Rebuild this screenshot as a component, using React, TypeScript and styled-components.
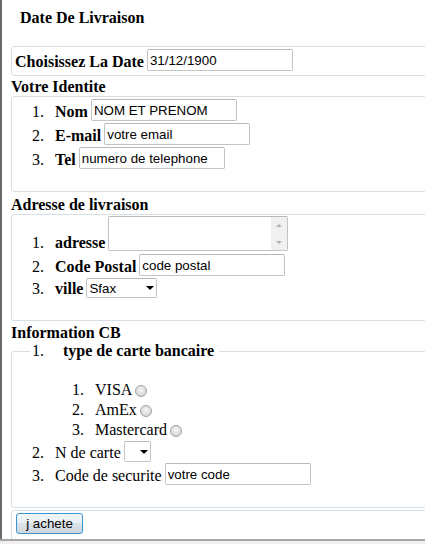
import React from "react";
import styled, { createGlobalStyle } from "styled-components";

const GlobalStyle = createGlobalStyle`
  html, body { margin: 0; padding: 0; background: #fff; overflow: hidden; }
  body {
    font-family: "Liberation Serif", "Times New Roman", serif;
    font-size: 16px;
    color: #000;
  }
`;

const Window = styled.div`
  width: 425px;
  height: 544px;
  display: flex;
  flex-direction: column;
  overflow: hidden;
`;

const Page = styled.form`
  flex: 1;
  min-height: 0;
  border-left: 2px solid #6a6a6a;
  padding-left: 9px;
  overflow: hidden;
`;

const StatusEdge = styled.div`
  flex: none;
  height: 3px;
  border-top: 2px solid #a6a6a6;
  background: #f2eeee;
`;

const Title = styled.div`
  margin: 9px 0 0 9px;
  font-weight: bold;
  line-height: 18px;
`;

const SectionTitle = styled.div<{ $top: number }>`
  margin-top: ${(p) => p.$top}px;
  font-weight: bold;
  line-height: 18px;
`;

const Box = styled.fieldset<{ $top: number; $pt?: number; $pb: number }>`
  margin: ${(p) => p.$top}px 0 0 0;
  padding: ${(p) => p.$pt ?? 2}px 0 ${(p) => p.$pb}px 3px;
  width: 440px;
  min-width: 0;
  box-sizing: border-box;
  border: 1px solid #d5dfe5;
  border-radius: 3px;
`;

const Legend = styled.legend`
  margin-left: 15px;
  padding: 0 2px;
  line-height: 18px;
  display: flex;
`;

const DateRow = styled.div`
  display: flex;
  align-items: flex-end;
`;

const FieldList = styled.ol<{ $gap: number; $top?: number }>`
  list-style: none;
  margin: ${(p) => p.$top ?? 0}px 0 0 0;
  padding: 0 0 0 17px;
  display: flex;
  flex-direction: column;
  gap: ${(p) => p.$gap}px;
`;

const Row = styled.li`
  display: flex;
  align-items: flex-end;
`;

const Marker = styled.span<{ $w?: number }>`
  flex: none;
  width: ${(p) => p.$w ?? 23}px;
  font-weight: normal;
  line-height: 18px;
`;

const Label = styled.span<{ $plain?: boolean }>`
  flex: none;
  font-weight: ${(p) => (p.$plain ? "normal" : "bold")};
  line-height: 18px;
  margin-right: 3px;
  white-space: nowrap;
`;

const TextInput = styled.input`
  flex: none;
  width: 146px;
  height: 22px;
  box-sizing: border-box;
  margin: 0;
  padding: 0 2px;
  border: 1px solid #c4c4c4;
  border-top-color: #b8b8b8;
  border-radius: 2px;
  font-family: "Liberation Sans", Arial, sans-serif;
  font-size: 13.33px;
  color: #000;
  background: #fff;
  outline: none;
`;

const AreaBox = styled.div`
  flex: none;
  display: flex;
  width: 180px;
  height: 35px;
  margin-bottom: 1px;
  box-sizing: border-box;
  border: 1px solid #c4c4c4;
  border-top-color: #b8b8b8;
  border-radius: 2px;
  overflow: hidden;
`;

const Area = styled.textarea`
  flex: 1;
  min-width: 0;
  border: 0;
  margin: 0;
  padding: 1px 2px;
  resize: none;
  overflow: hidden;
  outline: none;
  font-family: "Liberation Sans", Arial, sans-serif;
  font-size: 13.33px;
`;

const ScrollTrack = styled.div`
  flex: none;
  width: 16px;
  background: #f0f0f0;
  display: flex;
  flex-direction: column;
  justify-content: space-between;
  align-items: center;
  padding: 7px 0 6px;
  box-sizing: border-box;
`;

const ScrollArrow = styled.span<{ $down?: boolean }>`
  width: 0;
  height: 0;
  border-left: 3px solid transparent;
  border-right: 3px solid transparent;
  ${(p) =>
    p.$down
      ? "border-top: 3px solid #b0b0b0;"
      : "border-bottom: 3px solid #b0b0b0;"}
`;

const SelectWrap = styled.span<{ $w: number; $h: number }>`
  position: relative;
  flex: none;
  display: inline-flex;
  width: ${(p) => p.$w}px;
  height: ${(p) => p.$h}px;
`;

const Select = styled.select`
  appearance: none;
  -webkit-appearance: none;
  width: 100%;
  height: 100%;
  box-sizing: border-box;
  margin: 0;
  padding: 0 0 0 2px;
  border: 1px solid #c4c4c4;
  border-top-color: #b8b8b8;
  border-radius: 2px;
  background: #fff;
  color: #000;
  font-family: "Liberation Sans", Arial, sans-serif;
  font-size: 13.33px;
  outline: none;
`;

const SelectArrow = styled.span`
  position: absolute;
  right: 3px;
  top: 50%;
  margin-top: -2px;
  width: 0;
  height: 0;
  border-left: 4px solid transparent;
  border-right: 4px solid transparent;
  border-top: 4px solid #000;
  pointer-events: none;
`;

const CardList = styled.ol`
  list-style: none;
  margin: 18px 0 0 0;
  padding: 0 0 0 57px;
`;

const CardItem = styled.li`
  display: flex;
  align-items: center;
  height: 20px;
  line-height: 20px;
`;

const CardName = styled.span`
  flex: none;
  white-space: nowrap;
`;

const Radio = styled.input.attrs({ type: "radio" })`
  appearance: none;
  -webkit-appearance: none;
  flex: none;
  margin: 1px 0 0 3px;
  width: 12px;
  height: 12px;
  box-sizing: border-box;
  border-radius: 50%;
  border: 1px solid #a2a2a2;
  background: radial-gradient(circle at 50% 40%, #f7f7f7 0%, #dedede 55%, #c9c9c9 100%);
`;

const BuyButton = styled.button`
  display: block;
  margin: 0 0 0 1px;
  width: 67px;
  height: 21px;
  padding: 0;
  box-sizing: border-box;
  border: 1px solid #3c93d3;
  border-radius: 3px;
  background: linear-gradient(#f2f6f9, #e9eef2 50%, #dbe2e8 50%, #cfd7de);
  font-family: "Liberation Sans", Arial, sans-serif;
  font-size: 13.33px;
  color: #000;
`;

const identity = [
  { n: "1.", label: "Nom", value: "NOM ET PRENOM" },
  { n: "2.", label: "E-mail", value: "votre email" },
  { n: "3.", label: "Tel", value: "numero de telephone" },
];

const cards = ["VISA", "AmEx", "Mastercard"];

export default function App() {
  return (
    <Window>
      <GlobalStyle />
      <Page onSubmit={(e) => e.preventDefault()}>
        <Title>Date De Livraison</Title>

        <Box $top={19} $pb={4}>
          <DateRow>
            <Label>Choisissez La Date</Label>
            <TextInput defaultValue="31/12/1900" />
          </DateRow>
        </Box>

        <SectionTitle $top={2}>Votre Identite</SectionTitle>
        <Box $top={0} $pb={22}>
          <FieldList $gap={2}>
            {identity.map((f) => (
              <Row key={f.n}>
                <Marker>{f.n}</Marker>
                <Label>{f.label}</Label>
                <TextInput defaultValue={f.value} />
              </Row>
            ))}
          </FieldList>
        </Box>

        <SectionTitle $top={4}>Adresse de livraison</SectionTitle>
        <Box $top={0} $pt={1} $pb={22}>
          <FieldList $gap={2}>
            <Row>
              <Marker>1.</Marker>
              <Label>adresse</Label>
              <AreaBox>
                <Area />
                <ScrollTrack>
                  <ScrollArrow />
                  <ScrollArrow $down />
                </ScrollTrack>
              </AreaBox>
            </Row>
            <Row>
              <Marker>2.</Marker>
              <Label>Code Postal</Label>
              <TextInput defaultValue="code postal" />
            </Row>
            <Row>
              <Marker>3.</Marker>
              <Label>ville</Label>
              <SelectWrap $w={71} $h={20}>
                <Select defaultValue="Sfax">
                  <option>Sfax</option>
                  <option>Tunis</option>
                  <option>Sousse</option>
                </Select>
                <SelectArrow />
              </SelectWrap>
            </Row>
          </FieldList>
        </Box>

        <SectionTitle $top={3}>Information CB</SectionTitle>
        <Box $top={0} $pb={22}>
          <Legend>
            <Marker $w={31}>1.</Marker>
            <Label>type de carte bancaire</Label>
          </Legend>
          <CardList>
            {cards.map((c, i) => (
              <CardItem key={c}>
                <Marker>{i + 1}.</Marker>
                <CardName>{c}</CardName>
                <Radio name="carte" />
              </CardItem>
            ))}
          </CardList>
          <FieldList $gap={1} $top={1}>
            <Row>
              <Marker>2.</Marker>
              <Label $plain>N de carte</Label>
              <SelectWrap $w={27} $h={21}>
                <Select defaultValue="">
                  <option value=""></option>
                </Select>
                <SelectArrow />
              </SelectWrap>
            </Row>
            <Row>
              <Marker>3.</Marker>
              <Label $plain>Code de securite</Label>
              <TextInput defaultValue="votre code" />
            </Row>
          </FieldList>
        </Box>

        <Box $top={2} $pb={10}>
          <BuyButton type="submit">j achete</BuyButton>
        </Box>
      </Page>
      <StatusEdge />
    </Window>
  );
}
